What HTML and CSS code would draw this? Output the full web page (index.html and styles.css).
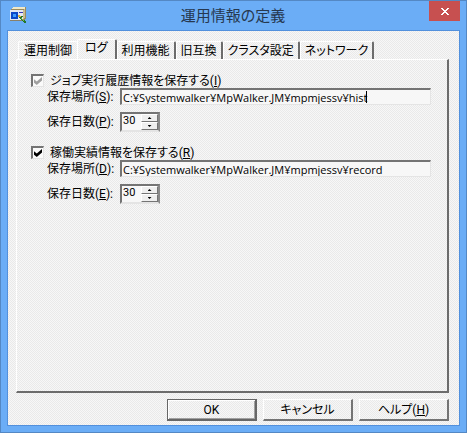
FILE: index.html
```html
<!DOCTYPE html>
<html lang="ja">
<head>
  <meta charset="utf-8">
  <title>運用情報の定義</title>
  <link rel="stylesheet" href="styles.css">
</head>
<body>
  <div class="window">
    <header class="titlebar">
      <svg class="app-icon" width="17" height="17" viewBox="0 0 17 17" shape-rendering="crispEdges">
        <path d="M0 3L3 0H16V11L13 14H0Z" fill="#9a8a5c"/>
        <path d="M3 0H15V2H2Z" fill="#efe8c9"/>
        <path d="M13 3H14V2H15V11H14V12H13Z" fill="#c9bc90"/>
        <path d="M0 3H13V13H0Z" fill="#e4e9f4"/>
        <path d="M0 13H13V14H0Z" fill="#8a8068"/>
        <path d="M1 5H8V12H1Z" fill="#0b48c8"/>
        <path d="M3 7H6V10H3Z" fill="#3c9cff"/>
        <path d="M9 5H13V6H9Z" fill="#3a3ab0"/>
        <path d="M8 8H10V9H11V11H9V10H8Z" fill="#e3b13c"/>
        <path d="M9 10H11V9H13V10H12V12H13V13H15V14H16V16H14V15H13V14H12V13H11V12H10V11H9Z" fill="#23752a"/>
        <path d="M11 11H12V12H13V13H14V14H13V13H12V12H11Z" fill="#74bd45"/>
      </svg>
      <h1 class="title">運用情報の定義</h1>
      <button class="close-btn" type="button" aria-label="閉じる">
        <svg width="8" height="7" viewBox="0 0 8 7" shape-rendering="crispEdges">
          <path d="M0 0H2V1H3V2H5V1H6V0H8V1H7V2H6V3H5V4H6V5H7V6H8V7H6V6H5V5H3V6H2V7H0V6H1V5H2V4H3V3H2V2H1V1H0Z" fill="#fff"/>
        </svg>
      </button>
    </header>

    <form class="client" onsubmit="return false;">
      <div class="tabs" role="tablist">
        <button class="tab" type="button" role="tab">運用制御</button>
        <button class="tab tab-active" type="button" role="tab" aria-selected="true">ログ</button>
        <button class="tab" type="button" role="tab">利用機能</button>
        <button class="tab" type="button" role="tab">旧互換</button>
        <button class="tab" type="button" role="tab">クラスタ設定</button>
        <button class="tab" type="button" role="tab">ネットワーク</button>
      </div>

      <div class="panel" role="tabpanel">
        <!-- ジョブ実行履歴情報 -->
        <section class="group">
          <div class="check-row">
            <input class="check" type="checkbox" id="saveHist" checked disabled>
            <label for="saveHist">ジョブ実行履歴情報を保存する(<u>I</u>)</label>
          </div>
          <div class="row">
            <label class="row-label" for="histPath">保存場所(<u>S</u>):</label>
            <div class="path-box">
              <input class="path" type="text" id="histPath" value="C:¥Systemwalker¥MpWalker.JM¥mpmjessv¥hist">
              <span class="caret"></span>
            </div>
          </div>
          <div class="row row-days">
            <label class="row-label" for="histDays">保存日数(<u>P</u>):</label>
            <div class="spin">
              <input class="spin-value" type="text" id="histDays" value="30">
              <div class="spin-buttons">
                <button class="spin-btn spin-up" type="button" aria-label="増やす"></button>
                <button class="spin-btn spin-down" type="button" aria-label="減らす"></button>
              </div>
            </div>
          </div>
        </section>

        <!-- 稼働実績情報 -->
        <section class="group">
          <div class="check-row">
            <input class="check" type="checkbox" id="saveRecord" checked>
            <label for="saveRecord">稼働実績情報を保存する(<u>R</u>)</label>
          </div>
          <div class="row">
            <label class="row-label" for="recordPath">保存場所(<u>D</u>):</label>
            <div class="path-box">
              <input class="path" type="text" id="recordPath" value="C:¥Systemwalker¥MpWalker.JM¥mpmjessv¥record">
            </div>
          </div>
          <div class="row row-days">
            <label class="row-label" for="recordDays">保存日数(<u>E</u>):</label>
            <div class="spin">
              <input class="spin-value" type="text" id="recordDays" value="30">
              <div class="spin-buttons">
                <button class="spin-btn spin-up" type="button" aria-label="増やす"></button>
                <button class="spin-btn spin-down" type="button" aria-label="減らす"></button>
              </div>
            </div>
          </div>
        </section>
      </div>

      <div class="buttons">
        <button class="button button-default" type="submit">OK</button>
        <button class="button" type="button">キャンセル</button>
        <button class="button" type="button">ヘルプ(<u>H</u>)</button>
      </div>
    </form>
  </div>
</body>
</html>
```
FILE: styles.css
```css
* {
  box-sizing: border-box;
}
body {
  margin: 0;
  font-family: Roboto, "Noto Sans CJK JP", sans-serif;
  font-size: 12px;
  line-height: 14px;
  color: #000;
}
button,
input {
  font: inherit;
  color: inherit;
  margin: 0;
}
.window {
  display: flex;
  flex-direction: column;
  min-height: 100vh;
  padding: 0 6px 6px;
  border: 1px solid #5488c4;
  background-color: #6badf6;
  font-feature-settings: "palt";
}
.titlebar {
  display: flex;
  justify-content: space-between;
  align-items: flex-start;
  height: 29px;
}
.app-icon {
  margin: 6px 10px 0 3px;
}
.title {
  margin: 5px 0 0;
  font-size: 15px;
  font-weight: normal;
  line-height: 20px;
  color: #26384f;
}
.close-btn {
  display: flex;
  justify-content: center;
  align-items: center;
  width: 31px;
  height: 20px;
  padding: 0;
  border: none;
  background-color: #c75050;
}
.client {
  display: flex;
  flex-direction: column;
  flex: 1;
  padding: 8px 10px 4px 8px;
  border: 1px solid #5290dc;
  background: repeating-conic-gradient(#e9e9e9 0 25%, #f7f7f7 0 50%) 0 0 / 2px 2px;
}
.tabs {
  display: flex;
  align-items: flex-end;
  padding-left: 2px;
}
.tab {
  height: 18px;
  padding: 0 4px;
  border: solid;
  border-width: 1px 2px 0 1px;
  border-color: #fff #6c6c6c #fff #fff;
  border-radius: 2px 2px 0 0;
  background: none;
  line-height: 14px;
  white-space: nowrap;
}
.tab:first-child {
  padding: 0 5px;
  border-right: none;
}
.tab-active {
  height: 20px;
  padding: 0 7px 4px;
}
.panel {
  flex: 1;
  padding: 13px 16px 13px 14px;
  border: solid;
  border-width: 1px 2px 2px 1px;
  border-color: #fff #6c6c6c #6c6c6c #fff;
}
.group {
  margin-bottom: 13px;
}
.check-row {
  display: flex;
  align-items: center;
  gap: 6px;
  height: 15px;
}
.check {
  appearance: none;
  display: grid;
  place-items: center;
  width: 13px;
  height: 13px;
  border: solid;
  border-width: 2px 1px 1px 2px;
  border-color: #747474 #e4e4e4 #e4e4e4 #747474;
  background-color: #fafafa;
}
.check:checked::before {
  content: "";
  width: 8px;
  height: 8px;
  background-color: #000;
  clip-path: polygon(0 29%, 35% 57%, 100% 0, 100% 43%, 35% 100%, 0 71%);
}
.check:disabled::before {
  background-color: #a0a0a0;
}
.row {
  display: flex;
  align-items: center;
  padding-left: 16px;
}
.row-days {
  margin-top: 7px;
}
.row-label {
  flex: none;
  width: 73px;
}
.path-box {
  position: relative;
  flex: 1;
}
.path {
  display: block;
  width: 100%;
  height: 17px;
  padding: 0 0 0 1px;
  border: solid;
  border-width: 2px 1px 1px 2px;
  border-color: #747474 #e4e4e4 #e4e4e4 #747474;
  background-color: #f7f7f7;
  font-family: "Open Sans", sans-serif;
  font-size: 11px;
  outline: none;
}
/* 入力カーソル */
.caret {
  position: absolute;
  top: 3px;
  left: 246px;
  width: 1px;
  height: 12px;
  background-color: #000;
}
.spin {
  display: flex;
  width: 40px;
  height: 20px;
  border: 2px solid #747474;
  border-right-color: #8a8a8a;
  border-bottom-color: #e4e4e4;
  background-color: #f7f7f7;
}
.spin-value {
  flex: 1;
  min-width: 0;
  padding: 0 0 2px 1px;
  border: none;
  background: none;
  font-size: 11px;
  outline: none;
}
.spin-buttons {
  display: flex;
  flex-direction: column;
  width: 17px;
}
.spin-btn {
  display: grid;
  place-items: center;
  flex: 1;
  padding: 0;
  border: 1px solid #fff;
  border-right-color: #747474;
  border-bottom-color: #747474;
  background-color: #efefef;
}
.spin-btn::before {
  content: "";
  width: 4px;
  height: 2px;
  background-color: #000;
}
.spin-up::before {
  clip-path: polygon(50% 0, 100% 100%, 0 100%);
}
.spin-down::before {
  clip-path: polygon(0 0, 100% 0, 50% 100%);
}
.buttons {
  display: flex;
  justify-content: flex-end;
  gap: 6px;
  margin-top: 6px;
}
.button {
  width: 90px;
  height: 22px;
  padding: 0;
  border: solid;
  border-width: 1px 2px 2px 1px;
  border-color: #fff #747474 #747474 #fff;
  background: none;
}
.button-default {
  border-color: #666;
  box-shadow: inset 1px 1px #fff, inset -1px -1px #a0a0a0;
}
```
